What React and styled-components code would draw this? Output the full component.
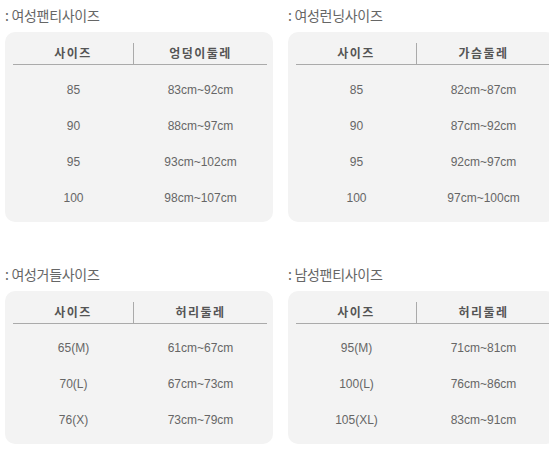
import React from 'react';
import styled, { createGlobalStyle } from 'styled-components';

const GlobalStyle = createGlobalStyle`
  html, body {
    margin: 0;
    padding: 0;
    background: #fff;
    overflow: hidden;
  }
  body {
    font-family: "Liberation Sans", "Noto Sans CJK KR", sans-serif;
  }
`;

const Frame = styled.div`
  width: 549px;
  height: 449px;
  overflow: hidden;
`;

const Page = styled.div`
  display: grid;
  grid-template-columns: 268px 268px;
  column-gap: 15px;
  row-gap: 42px;
  padding: 5px 0 0 5px;
`;

const Section = styled.section`
  display: flex;
  flex-direction: column;
`;

const Title = styled.h3`
  margin: 0 0 7px;
  height: 20px;
  line-height: 20px;
  font-size: 14px;
  font-weight: normal;
  color: #666;
  font-family: "Noto Sans CJK KR", sans-serif;
  letter-spacing: -0.3px;
`;

const Card = styled.div`
  background: #f3f3f3;
  border-radius: 10px;
  padding: 0 6px 6px 8px;
`;

const Table = styled.table`
  width: 100%;
  border-collapse: collapse;
  table-layout: fixed;
`;

const HeadRow = styled.tr`
  height: 32px;
  border-bottom: 1px solid #aaa;
`;

const HeadCell = styled.th`
  width: ${(p) => (p.$first ? '121px' : 'auto')};
  padding: 0;
  vertical-align: bottom;
  font-family: "Noto Sans CJK KR", sans-serif;
  font-size: 12px;
  font-weight: bold;
  color: #555;
  letter-spacing: 1.5px;
`;

const HeadInner = styled.div`
  height: 20px;
  line-height: 20px;
  margin-top: 11px;
  border-right: ${(p) => (p.$divider ? '1px solid #aaa' : 'none')};
  padding-bottom: 1px;
`;

const Spacer = styled.tr`
  height: 7px;
`;

const Row = styled.tr`
  height: 36px;
`;

const Cell = styled.td`
  padding: 0;
  text-align: center;
  font-size: 12px;
  color: #666;
`;

const sections = [
  {
    title: ': 여성팬티사이즈',
    col: '엉덩이둘레',
    rows: [
      ['85', '83cm~92cm'],
      ['90', '88cm~97cm'],
      ['95', '93cm~102cm'],
      ['100', '98cm~107cm'],
    ],
  },
  {
    title: ': 여성런닝사이즈',
    col: '가슴둘레',
    rows: [
      ['85', '82cm~87cm'],
      ['90', '87cm~92cm'],
      ['95', '92cm~97cm'],
      ['100', '97cm~100cm'],
    ],
  },
  {
    title: ': 여성거들사이즈',
    col: '허리둘레',
    rows: [
      ['65(M)', '61cm~67cm'],
      ['70(L)', '67cm~73cm'],
      ['76(X)', '73cm~79cm'],
    ],
  },
  {
    title: ': 남성팬티사이즈',
    col: '허리둘레',
    rows: [
      ['95(M)', '71cm~81cm'],
      ['100(L)', '76cm~86cm'],
      ['105(XL)', '83cm~91cm'],
    ],
  },
];

function SizeTable({ title, col, rows }) {
  return (
    <Section>
      <Title>{title}</Title>
      <Card>
        <Table>
          <thead>
            <HeadRow>
              <HeadCell $first>
                <HeadInner $divider>사이즈</HeadInner>
              </HeadCell>
              <HeadCell>
                <HeadInner>{col}</HeadInner>
              </HeadCell>
            </HeadRow>
          </thead>
          <tbody>
            <Spacer />
            {rows.map(([size, range]) => (
              <Row key={size}>
                <Cell>{size}</Cell>
                <Cell>{range}</Cell>
              </Row>
            ))}
          </tbody>
        </Table>
      </Card>
    </Section>
  );
}

export default function App() {
  return (
    <Frame>
      <GlobalStyle />
      <Page>
        {sections.map((s) => (
          <SizeTable key={s.title} {...s} />
        ))}
      </Page>
    </Frame>
  );
}
